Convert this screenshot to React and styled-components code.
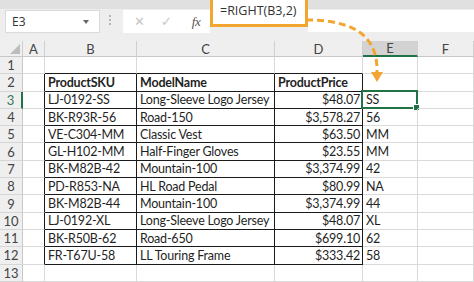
import React from 'react';
import styled, { createGlobalStyle } from 'styled-components';

const Global = createGlobalStyle`
  html, body {
    margin: 0;
    padding: 0;
    background: #ffffff;
  }
`;

const Page = styled.div`
  position: relative;
  width: 474px;
  height: 282px;
  overflow: hidden;
  background: #e9e9e9;
  font-family: "Lato", "Liberation Sans", sans-serif;
`;

const Toolbar = styled.div`
  display: flex;
  align-items: flex-start;
  height: 41px;
  background: linear-gradient(#e0e0e0 0, #e0e0e0 9px, #eeeeee 9px);
`;

const NameBox = styled.div`
  display: flex;
  align-items: center;
  justify-content: space-between;
  box-sizing: border-box;
  width: 95px;
  height: 23px;
  margin: 10px 0 0 5px;
  padding: 0 10px 0 6px;
  background: #ffffff;
  border: 1px solid #dadada;
  font-family: "Open Sans", "Liberation Sans", sans-serif;
  font-size: 12px;
  color: #333333;
`;

const Caret = styled.span`
  width: 0;
  height: 0;
  border-left: 3.5px solid transparent;
  border-right: 3.5px solid transparent;
  border-top: 4px solid #666666;
`;

const Dots = styled.div`
  display: flex;
  flex-direction: column;
  gap: 2px;
  margin: 15px 12px 0 9px;

  span {
    width: 2px;
    height: 2px;
    background: #b4b4b4;
  }
`;

const Buttons = styled.div`
  display: flex;
  align-items: center;
  box-sizing: border-box;
  width: 87px;
  height: 23px;
  margin-top: 10px;
  padding: 0 0 0 11px;
  gap: 16px;
  background: #ffffff;
  color: #c6c6c6;
  font-family: "DejaVu Sans", sans-serif;
  font-size: 13px;
`;

const Fx = styled.span`
  margin-left: 4px;
  font-family: "Liberation Serif", serif;
  font-style: italic;
  font-size: 13px;
  color: #555555;
  letter-spacing: -0.5px;
`;

const FormulaInput = styled.div`
  flex: 1;
  height: 22px;
  margin-top: 10px;
  background: #ffffff;
`;

const FormulaBox = styled.div`
  display: flex;
  align-items: center;
  box-sizing: border-box;
  width: 98px;
  height: 33px;
  margin: -6px 0 0 0;
  padding-left: 7px;
  border: 3px solid #f2a630;
  background: #ffffff;
  font-family: "Open Sans", "Liberation Sans", sans-serif;
  font-size: 12.5px;
  color: #333333;
`;

const Sheet = styled.div`
  display: grid;
  grid-template-columns: 23px 22px 92px 138px 88px 55px 56px;
  grid-template-rows: 16px repeat(13, 17.3px);
  background: #ffffff;
`;

const ColHead = styled.div`
  display: flex;
  align-items: center;
  justify-content: center;
  box-sizing: border-box;
  background: ${p => (p.$active ? '#d3d3d3' : '#efefef')};
  border-right: 1px solid #d0d0d0;
  border-bottom: ${p => (p.$active ? '2px solid #217346' : '1px solid #c8c8c8')};
  font-size: 13px;
  color: #444444;
`;

const Corner = styled.div`
  position: relative;
  background: #efefef;
  border-right: 1px solid #d0d0d0;
  border-bottom: 1px solid #c8c8c8;
  box-sizing: border-box;

  &::after {
    content: '';
    position: absolute;
    right: 2px;
    bottom: 2px;
    border-left: 10px solid transparent;
    border-bottom: 10px solid #bdbdbd;
  }
`;

const RowHead = styled.div`
  display: flex;
  align-items: center;
  justify-content: center;
  box-sizing: border-box;
  background: #efefef;
  border-right: ${p => (p.$active ? '2px solid #217346' : '1px solid #c8c8c8')};
  border-bottom: 1px solid #d6d6d6;
  font-size: 13px;
  color: ${p => (p.$active ? '#3b7a57' : '#444444')};
`;

const Cell = styled.div`
  position: relative;
  display: flex;
  align-items: center;
  justify-content: ${p => (p.$right ? 'flex-end' : 'flex-start')};
  box-sizing: border-box;
  padding: 0 2px 0 3px;
  white-space: nowrap;
  border-right: 1px solid ${p => (p.$darkRight ? '#1a1a1a' : '#dadada')};
  border-bottom: 1px solid ${p => (p.$darkBottom ? '#1a1a1a' : '#dadada')};
  font-size: 12.5px;
  letter-spacing: -0.2px;
  font-weight: ${p => (p.$bold ? 700 : 400)};
  color: #1f1f1f;
`;

const Selection = styled.div`
  position: absolute;
  left: -2px;
  top: -2px;
  right: -1px;
  bottom: -1px;
  border: 2px solid #217346;
  pointer-events: none;

  &::after {
    content: '';
    position: absolute;
    right: -4px;
    bottom: -4px;
    width: 5px;
    height: 5px;
    background: #217346;
    border: 1px solid #ffffff;
  }
`;

const Arrow = styled.svg`
  position: absolute;
  left: 0;
  top: 0;
  pointer-events: none;
`;

const rows = [
  ['ProductSKU', 'ModelName', 'ProductPrice', ''],
  ['LJ-0192-SS', 'Long-Sleeve Logo Jersey', '$48.07', 'SS'],
  ['BK-R93R-56', 'Road-150', '$3,578.27', '56'],
  ['VE-C304-MM', 'Classic Vest', '$63.50', 'MM'],
  ['GL-H102-MM', 'Half-Finger Gloves', '$23.55', 'MM'],
  ['BK-M82B-42', 'Mountain-100', '$3,374.99', '42'],
  ['PD-R853-NA', 'HL Road Pedal', '$80.99', 'NA'],
  ['BK-M82B-44', 'Mountain-100', '$3,374.99', '44'],
  ['LJ-0192-XL', 'Long-Sleeve Logo Jersey', '$48.07', 'XL'],
  ['BK-R50B-62', 'Road-650', '$699.10', '62'],
  ['FR-T67U-58', 'LL Touring Frame', '$333.42', '58'],
];

const letters = ['A', 'B', 'C', 'D', 'E', 'F'];

export default function App() {
  const body = [];
  for (let r = 1; r <= 13; r++) {
    const data = r >= 2 && r <= 12 ? rows[r - 2] : null;
    body.push(<RowHead key={`h${r}`} $active={r === 3}>{r}</RowHead>);
    letters.forEach((l, c) => {
      const inTable = data && c >= 1 && c <= 3;
      let text = '';
      if (data && c >= 1 && c <= 4) text = data[c - 1];
      body.push(
        <Cell
          key={`${l}${r}`}
          $darkRight={data && c <= 3}
          $darkBottom={r <= 12 && c >= 1 && c <= 3}
          $right={inTable && c === 3 && r > 2}
          $bold={r === 2 && inTable}
        >
          {text}
          {r === 3 && l === 'E' && <Selection />}
        </Cell>
      );
    });
  }

  return (
    <Page>
      <Global />
      <Toolbar>
        <NameBox>E3<Caret /></NameBox>
        <Dots><span /><span /><span /></Dots>
        <Buttons>
          <span>✕</span>
          <span>✓</span>
          <Fx>fx</Fx>
        </Buttons>
        <FormulaBox>=RIGHT(B3,2)</FormulaBox>
        <FormulaInput />
      </Toolbar>
      <Sheet>
        <Corner />
        {letters.map(l => (
          <ColHead key={l} $active={l === 'E'}>{l}</ColHead>
        ))}
        {body}
      </Sheet>
      <Arrow width="474" height="282" viewBox="0 0 474 282">
        <path
          d="M306 20 C 345 20, 378 30, 377 72"
          fill="none"
          stroke="#f2a630"
          strokeWidth="3"
          strokeDasharray="7 4"
        />
        <path d="M371 72 L383 72 L377 82 Z" fill="#f2a630" />
      </Arrow>
    </Page>
  );
}
